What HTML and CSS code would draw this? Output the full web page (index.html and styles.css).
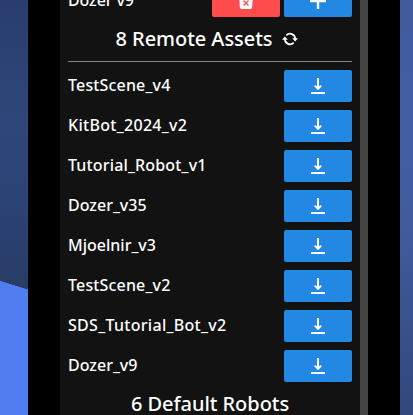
FILE: index.html
```html
<!DOCTYPE html>
<html lang="en">
<head>
<meta charset="utf-8">
<title>Assets</title>
<link rel="stylesheet" href="styles.css">
</head>
<body>
<svg width="0" height="0" class="defs">
  <symbol id="download" viewBox="0 0 14 16"><path d="M7 0v10M3.800 7.600L7 10.800l3.200-3.200" fill="none" stroke="#fff" stroke-width="2"/><path d="M0 14h14v2H0z" fill="#fff"/></symbol>
</svg>
<div class="scene">
  <div class="side left"></div>
  <main class="modal">
    <div class="panel">
      <div class="row first"><span class="label">Dozer v9</span>
        <button class="btn danger"><svg width="14" height="16" viewBox="0 0 14 16"><path d="M0 0h14l-.8 14q-.2 2-2 2H2.800q-1.800 0-2-2z" fill="#fff"/><path d="M4.500 7.500l5 5M9.500 7.500l-5 5" stroke="#ff4d4d" stroke-width="1.400"/></svg></button>
        <button class="btn"><svg width="16" height="16" viewBox="0 0 16 16"><path d="M8 0v16M0 8h16" stroke="#fff" stroke-width="2.400"/></svg></button>
      </div>
      <h2 class="title remote"><span>8 Remote Assets</span><svg width="16" height="14" viewBox="0 0 16 14"><path d="M4.300 3.300A5.200 5.200 0 0 1 13.200 7M11.700 10.700A5.200 5.200 0 0 1 2.800 7" fill="none" stroke="#fff" stroke-width="1.700"/><path d="M10.200 6.200H16L13.100 9.600zM0 7.800h5.800L2.900 4.400z" fill="#fff"/></svg></h2>
      <hr>
      <div class="list">
        <div class="row"><span class="label">TestScene_v4</span><button class="btn"><svg width="14" height="16"><use href="#download"/></svg></button></div>
        <div class="row"><span class="label wide">KitBot_2024_v2</span><button class="btn"><svg width="14" height="16"><use href="#download"/></svg></button></div>
        <div class="row"><span class="label">Tutorial_Robot_v1</span><button class="btn"><svg width="14" height="16"><use href="#download"/></svg></button></div>
        <div class="row"><span class="label snug">Dozer_v35</span><button class="btn"><svg width="14" height="16"><use href="#download"/></svg></button></div>
        <div class="row"><span class="label snug">Mjoelnir_v3</span><button class="btn"><svg width="14" height="16"><use href="#download"/></svg></button></div>
        <div class="row"><span class="label">TestScene_v2</span><button class="btn"><svg width="14" height="16"><use href="#download"/></svg></button></div>
        <div class="row"><span class="label wide">SDS_Tutorial_Bot_v2</span><button class="btn"><svg width="14" height="16"><use href="#download"/></svg></button></div>
        <div class="row"><span class="label snug">Dozer_v9</span><button class="btn"><svg width="14" height="16"><use href="#download"/></svg></button></div>
      </div>
      <h2 class="title">6 Default Robots</h2>
    </div>
    <div class="scrollbar"></div>
  </main>
  <div class="side right"></div>
</div>
</body>
</html>
```
FILE: styles.css
```css
* { box-sizing: border-box; }
body { margin: 0; overflow: hidden; background: #000; color: #fff; font-family: "Noto Sans", sans-serif; }
.defs { display: none; }
.scene { display: grid; grid-template-columns: 28px 367px 18px; grid-template-columns: 28px 372px 13px; width: 413px; height: 415px; overflow: hidden; }
.left {
  background:
    linear-gradient(#507df0, #507df0) 0 290px / 28px 125px no-repeat,
    linear-gradient(197.200deg, transparent 50%, #507df0 52%) 0 280px / 28px 10px no-repeat,
    linear-gradient(180deg, #293e6e 0, #2e4679 120px, #2c4376 200px, #283c67 285px);
}
.right { background: linear-gradient(180deg, #405b9e 0, #425fa4 110px, #405c9f 230px, #31487c 415px); }
.modal { display: flex; height: 415px; padding: 0 32px; background: #000; overflow: hidden; }
.panel { width: 300px; padding: 0 8px; background: #121212; }
.scrollbar { width: 8px; background: #444; }
.row { display: flex; align-items: center; gap: 4px; height: 32px; }
.first { margin-top: -15px; }
.label { flex: 1; font-size: 16px; line-height: 20px; font-weight: 500; letter-spacing: 0.160px; white-space: nowrap; padding-bottom: 2px; }
.first .label { letter-spacing: -0.100px; }
.wide { letter-spacing: 0.300px; }
.snug { letter-spacing: 0; }
.btn { display: flex; align-items: center; justify-content: center; width: 68px; height: 32px; padding: 0; border: 0; border-radius: 2px; background: #2388e4; }
.danger { background: #ff4d4d; }
.title { display: flex; align-items: center; justify-content: center; gap: 10px; height: 44px; margin: 0; font-size: 20px; line-height: 24px; font-weight: 500; letter-spacing: -0.050px; white-space: nowrap; }
.remote { padding-right: 6px; }
hr { height: 1px; margin: 0 0 8px; border: 0; background: #888; }
.list { display: grid; gap: 8px; }
```
